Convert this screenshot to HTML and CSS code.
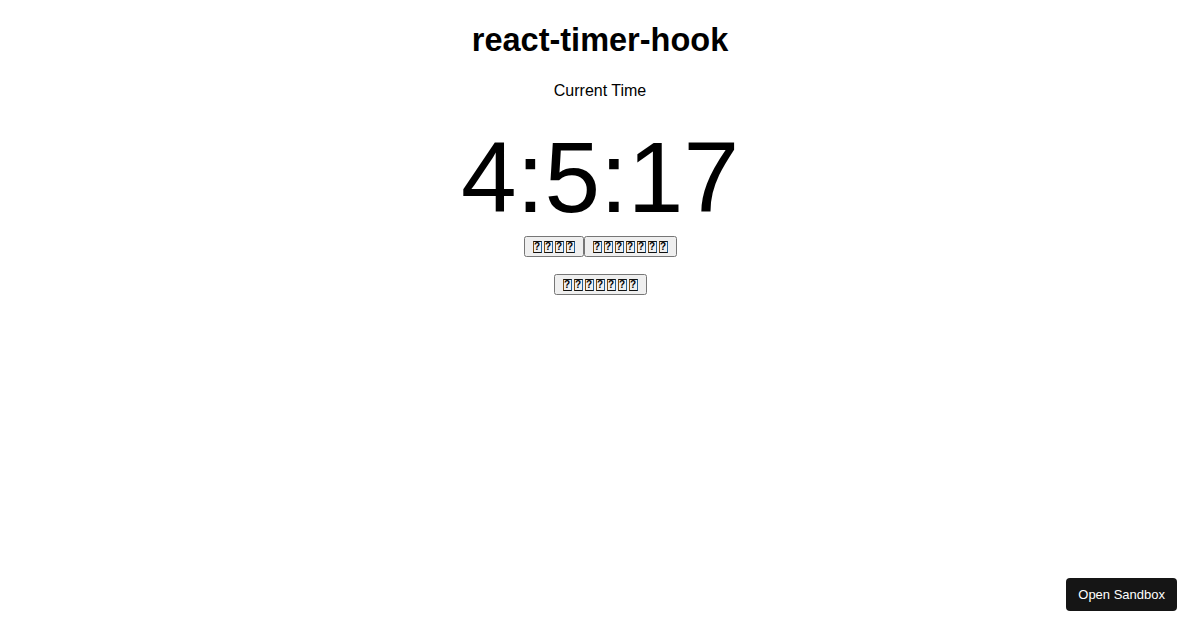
FILE: index.html
```html
<!DOCTYPE html>
<html lang="en">
<head>
    <meta charset="UTF-8">
    <meta name="viewport" content="width=device-width, initial-scale=1.0">
    <title>react-timer-hook</title>
    <link rel="stylesheet" href="styles.css">
</head>
<body>
    <div class="app">
        <h1 class="titulo">react-timer-hook</h1>
        <p class="subtitulo">Current Time</p>
        <div class="reloj">
            <span>4</span>:<span>5</span>:<span>17</span>
        </div>
        <!-- los textos de los botones salen como cajas "?" en la captura -->
        <div class="botones">
            <button><span class="caja">?</span><span class="caja">?</span><span class="caja">?</span><span class="caja">?</span></button><button><span class="caja">?</span><span class="caja">?</span><span class="caja">?</span><span class="caja">?</span><span class="caja">?</span><span class="caja">?</span><span class="caja">?</span></button>
        </div>
        <div class="botones segunda">
            <button><span class="caja">?</span><span class="caja">?</span><span class="caja">?</span><span class="caja">?</span><span class="caja">?</span><span class="caja">?</span><span class="caja">?</span></button>
        </div>
    </div>

    <!-- boton flotante del sandbox -->
    <a class="sandbox" href="#">Open Sandbox</a>
</body>
</html>
```

FILE: styles.css
```css
body {
    margin: 0;
    font-family: "Liberation Sans", Arial, sans-serif;
    background: #fff;
    color: #000;
}

.app {
    text-align: center;
}

.titulo {
    font-size: 32.5px;
    margin: 22px 0 23px;
}

.subtitulo {
    font-size: 16px;
    margin: 16px 0;
}

.reloj {
    font-size: 100px;
    padding-top: 5px;
    line-height: 113px;
}

.botones {
    display: flex;
    justify-content: center;
    margin-top: 2px;
}

.botones button {
    box-sizing: border-box;
    height: 21px;
    font-family: "Liberation Sans", Arial, sans-serif;
    font-size: 13.33px;
    line-height: 12px;
    padding: 0 6px;
    display: flex;
    align-items: center;
}

.caja {
    display: inline-block;
    box-sizing: border-box;
    width: 9px;
    height: 12px;
    margin: 0 1px;
    border: 1px solid #111;
    border-left-color: #7a4a10;
    border-right-color: #1f5f9a;
    font-size: 10px;
    font-weight: bold;
    line-height: 10px;
}

.segunda {
    margin-top: 17px;
}

.sandbox {
    position: fixed;
    right: 23px;
    bottom: 19px;
    background: #151515;
    color: #fff;
    font-size: 13px;
    text-decoration: none;
    padding: 9px 12px;
    border-radius: 4px;
}
```
